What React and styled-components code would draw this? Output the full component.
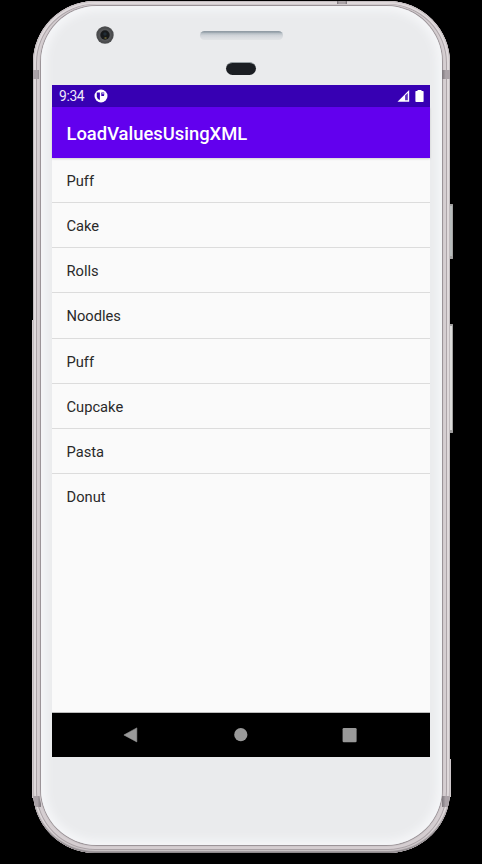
import React from 'react';
import styled, { createGlobalStyle } from 'styled-components';

const GlobalStyle = createGlobalStyle`
  * { box-sizing: border-box; }
  html, body { margin: 0; background: #000; }
  body { font-family: Roboto, sans-serif; overflow: hidden; }
  svg { display: block; }
`;

const Stage = styled.main`
  display: flex;
  align-items: flex-start;
  width: 482px;
  height: 864px;
  padding: 1px 0 0 32px;
  background: #000;
`;

const Lip = styled.div`
  width: 1px;
  height: 478px;
  margin-top: 319px;
  background: #cfc8cb;
`;

const Device = styled.div`
  display: grid;
  grid-template: 5px 839px 8px / 8px 401px 8px;
  width: 417px;
  overflow: hidden;
  border-radius: 62px;
  background: #d5ced1;
  box-shadow:
    inset 0 -3px 2px -1px #8d878b,
    inset 0 0 0 1px #c5bec1,
    inset 0 0 0 3px #dfd9db,
    inset 0 0 0 4px #aca4a8;
`;

const TopRail = styled.div`
  grid-column: 1 / -1;
  display: flex;
  padding-left: 304px;
`;

const TopBand = styled.div`
  width: 10px;
  height: 4px;
  background: linear-gradient(90deg, #777176, #aaa3a7 20% 80%, #777176);
`;

const Rail = styled.div`
  display: flex;
  flex-direction: column;
  justify-content: space-between;
  padding: 64px 0 38px;
`;

const Band = styled.div`
  height: ${p => (p.$lower ? 11 : 9)}px;
  background: linear-gradient(${p => (p.$right ? 270 : 90)}deg, #aaa2a7 55%, #7d777c);
`;

const Face = styled.div`
  display: flex;
  flex-direction: column;
  padding: 0 12px 0 11px;
  border-radius: 56px;
  background: #eaebed;
  box-shadow: 0 0 0 1px #9b9498, 0 0 0 2px #d0c9cc, inset 0 0 9px 5px #f5f6f8;
`;

const Keys = styled.div`
  display: flex;
  flex-direction: column;
  width: 3px;
  padding-top: 203px;
`;

const SideKey = styled.div`
  height: ${p => (p.$long ? 109 : 55)}px;
  margin-bottom: ${p => (p.$long ? 326 : 65)}px;
  border: solid #a3a2a2;
  border-width: 2px 1px 3px 0;
  border-radius: 0 1px 1px 0;
  background: ${p => (p.$long ? '#dcdcdb' : '#b8bdbd')};
`;

const LowerLip = styled.div`
  width: 1px;
  height: 38px;
  background: #cfc8cb;
`;

const Forehead = styled.div`
  display: grid;
  grid-template-columns: 1fr 83px 1fr;
  align-items: start;
  flex: 0 0 79px;
  padding-top: 20px;
`;

const Camera = styled.svg`
  margin-left: 44px;
`;

const Sensors = styled.div`
  display: flex;
  flex-direction: column;
  align-items: center;
  gap: 22px;
  padding-top: 5px;
`;

const Speaker = styled.div`
  width: 83px;
  height: 9px;
  border-radius: 5px;
  background: linear-gradient(#929da6 0 12%, #b5bdc4 25%, #cfd3d8 48%, #dadde1 75%, #e1e3e5);
`;

const Proximity = styled.div`
  width: 30px;
  height: 13px;
  border-radius: 7px;
  background: #1b1e23;
  border-top: 1px solid #969ea2;
`;

const Screen = styled.section`
  display: flex;
  flex-direction: column;
  width: 378px;
  height: 672px;
  background: #fafafa;
`;

const StatusBar = styled.header`
  display: flex;
  align-items: center;
  flex: 0 0 22px;
  padding: 0 6px 0 7px;
  background: #3700b3;
  color: #fff;
`;

const Clock = styled.span`
  width: 35px;
  font-size: 13.8px;
  letter-spacing: -0.35px;
  line-height: 22px;
  color: #f0eafa;
`;

const SystemIcons = styled.div`
  display: flex;
  align-items: center;
  gap: 5px;
  margin-left: auto;
`;

const AppBar = styled.div`
  display: flex;
  align-items: center;
  flex: 0 0 51px;
  position: relative;
  padding: 2px 14.5px 0;
  background: #6200ee;
  box-shadow: 0 1px 2px rgba(0, 0, 0, 0.16);
`;

const Title = styled.h1`
  margin: 0;
  color: #fff;
  font-size: 18.4px;
  font-weight: 500;
  line-height: 24px;
`;

const List = styled.ul`
  flex: 1;
  margin: 0;
  padding: 0;
  list-style: none;
`;

const Item = styled.li`
  height: 45.17px;
  padding: 1px 14.5px 0;
  border-bottom: 1px solid #dcdcdc;
  color: #292929;
  font-size: 14.7px;
  line-height: 44px;
  &:last-child { border-bottom: 0; }
`;

const NavBar = styled.nav`
  display: flex;
  flex: 0 0 45px;
  align-items: center;
  justify-content: space-between;
  padding: 0 73px 0 71px;
  background: #000;
  border-top: 1px solid #bcbcbc;
`;

const foods = ['Puff', 'Cake', 'Rolls', 'Noodles', 'Puff', 'Cupcake', 'Pasta', 'Donut'];

export default function App() {
  return (
    <>
      <GlobalStyle />
      <Stage>
        <Lip />
        <Device>
          <TopRail><TopBand /></TopRail>
          <Rail><Band /><Band $lower /></Rail>
          <Face>
            <Forehead>
              <Camera width="18" height="18" viewBox="0 0 18 18">
                <circle cx="9" cy="9" r="8.7" fill="#4b4c4e" />
                <circle cx="9" cy="9" r="6.6" fill="#555658" />
                <circle cx="9" cy="9" r="4.7" fill="#17191b" />
                <circle cx="9" cy="8" r="1.7" fill="#202c35" />
                <path d="M8.5 11h2v2h-2z" fill="#5c552d" />
              </Camera>
              <Sensors><Speaker /><Proximity /></Sensors>
            </Forehead>
            <Screen>
              <StatusBar>
                <Clock>9:34</Clock>
                <svg width="14" height="14" viewBox="0 0 14 14">
                  <circle cx="7" cy="7" r="6.5" fill="#fff" />
                  <path d="M2.8 3.4h3.1v7.6a4.2 4.2 0 0 1-3.1-3z" fill="#3700b3" />
                  <path d="M7.3 3.4h2.9v2.5a1.2 1.2 0 0 1-1.2 1.2H7.3z" fill="#3700b3" />
                  <path d="M8.5 4h1v1.3h-1z" fill="#fff" />
                </svg>
                <SystemIcons>
                  <svg width="13" height="12" viewBox="0 0 13 12">
                    <path d="M.5 11.7 12.2.1v11.6z" fill="#fff" />
                    <path d="M8.1 5.6 10.8 3v7.3H8.1z" fill="#5c31c1" />
                  </svg>
                  <svg width="9" height="12" viewBox="0 0 9 12">
                    <path d="M2.5 0h4v1H8q.6 0 .6.7v9.5q0 .8-.7.8H1.2Q.4 12 .4 11.2V1.7Q.4 1 1 1h1.5z" fill="#fff" />
                  </svg>
                </SystemIcons>
              </StatusBar>
              <AppBar><Title>LoadValuesUsingXML</Title></AppBar>
              <List>
                {foods.map((food, index) => <Item key={index}>{food}</Item>)}
              </List>
              <NavBar>
                <svg width="15" height="16" viewBox="0 0 15 16"><path d="M13.8.9v14L.9 8z" fill="#999" stroke="#999" strokeWidth=".6" strokeLinejoin="round" /></svg>
                <svg width="15" height="14" viewBox="0 0 15 14"><circle cx="7.8" cy="6.7" r="6.6" fill="#999" /></svg>
                <svg width="15" height="15" viewBox="0 0 15 15"><rect x=".6" y=".1" width="14" height="14.2" rx="1.2" fill="#999" /></svg>
              </NavBar>
            </Screen>
          </Face>
          <Rail><Band $right /><Band $right $lower /></Rail>
        </Device>
        <Keys>
          <SideKey />
          <SideKey $long />
          <LowerLip />
        </Keys>
      </Stage>
    </>
  );
}
